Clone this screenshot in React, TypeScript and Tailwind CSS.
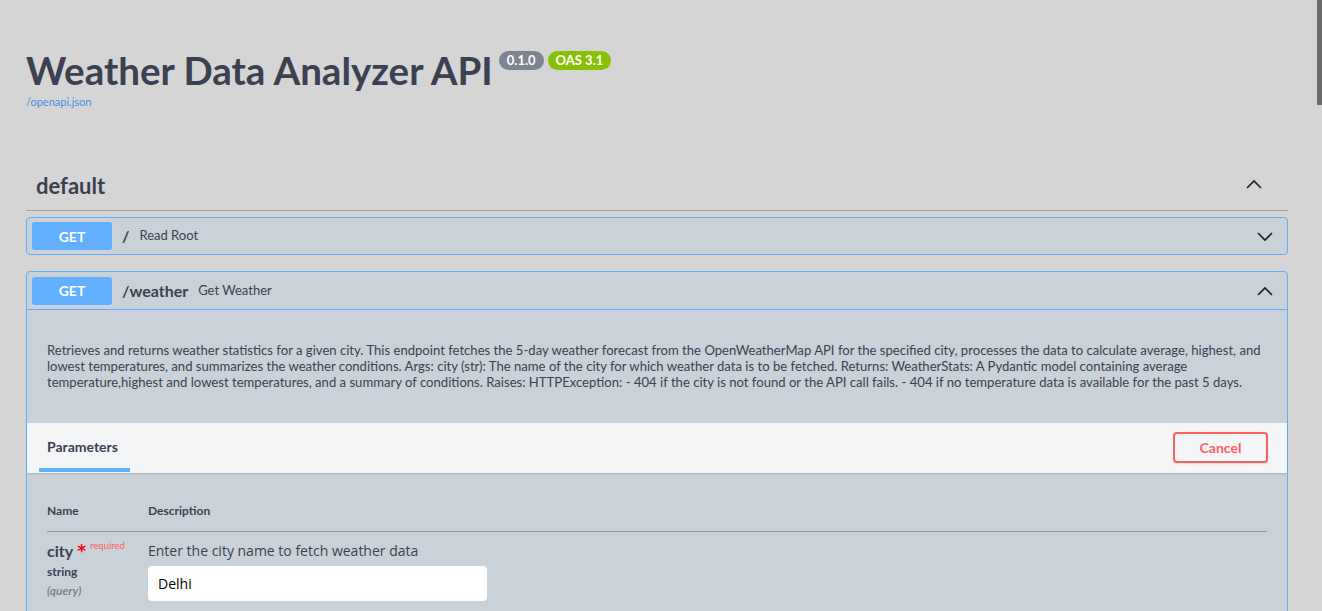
import React from "react";

const Chevron = ({ up }: { up?: boolean }) => (
  <svg width="20" height="20" viewBox="0 0 20 20" className="shrink-0">
    <path
      d={up ? "M3 14 L10 7 L17 14" : "M3 7 L10 14 L17 7"}
      fill="none"
      stroke="#1f1f1f"
      strokeWidth="1.6"
    />
  </svg>
);

const GetBadge = () => (
  <div className="w-[80px] h-[28px] rounded-[3px] bg-[#61affe] text-white text-[14px] font-bold flex items-center justify-center">
    GET
  </div>
);

export default function App() {
  return (
    <div
      className="h-[611px] w-full overflow-hidden bg-[#d5d5d5] flex text-[#3b4151]"
      style={{ fontFamily: "Lato, 'Open Sans', sans-serif" }}
    >
      <div className="flex-1 pl-[26px] pr-[29px]">
        {/* info */}
        <div className="pt-[46px] pb-[52px]">
          <div className="flex items-start">
            <h1 className="text-[38.5px] font-bold leading-[48px]">Weather Data Analyzer API</h1>
            <div className="flex gap-[4px] ml-[6px] mt-[5px]">
              <span className="h-[19px] px-[8px] rounded-full bg-[#7d8492] text-white text-[13px] font-bold leading-[19px]">
                0.1.0
              </span>
              <span className="h-[19px] px-[8px] rounded-full bg-[#89bf04] text-white text-[13px] font-bold leading-[19px]">
                OAS 3.1
              </span>
            </div>
          </div>
          <div className="text-[11px] text-[#4990e2] leading-[14px] mt-[1px]">/openapi.json</div>
        </div>

        {/* tag */}
        <div className="flex items-center justify-between h-[50px] pl-[10px] pr-[24px] border-b border-[#a3a3a3]">
          <h3 className="text-[22px] font-bold">default</h3>
          <div className="-mt-[4px]">
            <Chevron up />
          </div>
        </div>

        {/* GET / */}
        <div className="mt-[6px] border border-[#61affe] rounded-[4px] bg-[#c9d1d9] h-[38px] flex items-center pl-[5px] pr-[12px]">
          <GetBadge />
          <span className="ml-[10px] text-[16px] font-bold">/</span>
          <span className="ml-[10px] text-[13px]">Read Root</span>
          <div className="flex-1" />
          <Chevron />
        </div>

        {/* GET /weather */}
        <div className="mt-[16px] border border-[#61affe] rounded-[4px] bg-[#c9d1d9] pb-[40px]">
          <div className="h-[38px] flex items-center pl-[5px] pr-[12px] border-b border-[#61affe]">
            <GetBadge />
            <span className="ml-[10px] text-[16px] font-bold">/weather</span>
            <span className="ml-[10px] text-[13px]">Get Weather</span>
            <div className="flex-1" />
            <Chevron up />
          </div>
          <div className="px-[20px] pt-[32px] pb-[33px] text-[13.1px] leading-[16px]">
            Retrieves and returns weather statistics for a given city. This endpoint fetches the 5-day weather
            forecast from the OpenWeatherMap API for the specified city, processes the data to calculate average,
            highest, and lowest temperatures, and summarizes the weather conditions. Args: city (str): The name of
            the city for which weather data is to be fetched. Returns: WeatherStats: A Pydantic model containing
            average temperature,highest and lowest temperatures, and a summary of conditions. Raises: HTTPException: -
            404 if the city is not found or the API call fails. - 404 if no temperature data is available for the
            past 5 days.
          </div>
          <div className="bg-[#f4f5f7] h-[50px] flex items-center justify-between pl-[12px] pr-[19px] shadow-[0_1px_2px_rgba(0,0,0,0.15)]">
            <div className="h-full flex flex-col justify-end">
              <div className="pl-[8px] pr-[12px] text-[14px] font-bold leading-[20px] pb-[11px]">Parameters</div>
              <div className="h-[4px] bg-[#61affe] mb-[1px]" />
            </div>
            <button className="w-[95px] h-[31px] -mt-[2px] border-2 border-[#ff6060] rounded-[4px] text-[#ff6060] text-[14px] font-bold bg-transparent shadow-[0_1px_2px_rgba(0,0,0,0.1)]">
              Cancel
            </button>
          </div>
          <div className="px-[20px] pt-[29px]">
            <div className="flex border-b border-[#8f949c] pb-[11px] text-[12px] font-bold">
              <div className="w-[101px]">Name</div>
              <div>Description</div>
            </div>
            <div className="flex pt-[10px]">
              <div className="w-[101px]">
                <div className="flex items-start">
                  <span className="text-[16px] font-bold leading-[18px]">city</span>
                  <span
                    className="text-[#ff0000] text-[17px] font-bold leading-[17px] ml-[4px] mt-[1px]"
                    style={{ fontFamily: "'DejaVu Sans', sans-serif" }}
                  >
                    *
                  </span>
                  <span className="text-[#ff6060] text-[9.5px] leading-[10px] ml-[4px] -mt-[1px]">required</span>
                </div>
                <div className="text-[12px] font-bold mt-[4px] leading-[16px]">string</div>
                <div className="text-[12px] italic font-semibold text-[#7d7d7d] mt-[3px] leading-[16px]">(query)</div>
              </div>
              <div>
                <div className="text-[14px] leading-[18px]" style={{ fontFamily: "'Open Sans', sans-serif" }}>
                  Enter the city name to fetch weather data
                </div>
                <div
                  className="mt-[6px] w-[339px] h-[35px] bg-white rounded-[4px] flex items-center px-[10px] text-[14px] text-black"
                  style={{ fontFamily: "'Open Sans', sans-serif" }}
                >
                  Delhi
                </div>
              </div>
            </div>
          </div>
        </div>
      </div>
      <div className="w-[5px] shrink-0 flex flex-col">
        <div className="h-[105px] bg-[#6b6b6b]" />
      </div>
    </div>
  );
}
